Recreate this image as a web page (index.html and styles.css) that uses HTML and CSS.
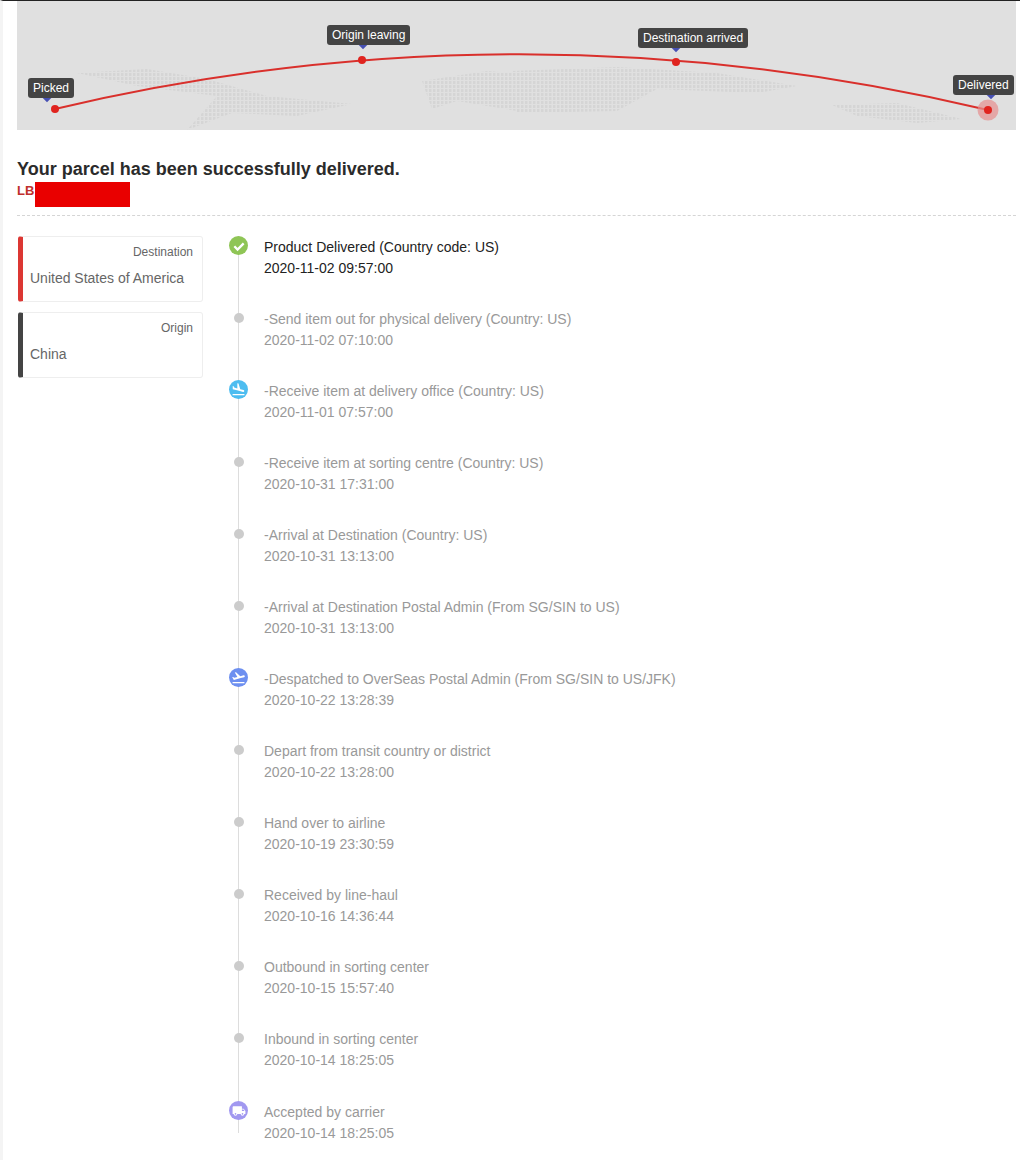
FILE: index.html
```html
<!DOCTYPE html>
<html lang="en">
<head>
    <meta charset="UTF-8">
    <title>Parcel tracking</title>
    <link rel="stylesheet" href="styles.css">
</head>
<body>
    <div class="container">
        <div class="route-map">
            <svg class="route-svg" viewBox="0 0 999 129" width="999" height="129">
                <defs>
                    <pattern id="dots" width="4" height="4" patternUnits="userSpaceOnUse">
                        <rect width="2.5" height="3" fill="#d5d5d5"/>
                    </pattern>
                </defs>
                <g fill="url(#dots)">
                    <polygon points="60,72 130,68 190,78 250,95 335,103 280,115 215,112 170,129 200,95 120,85"/>
                    <polygon points="405,80 470,70 495,72 500,110 440,100 415,108"/>
                    <polygon points="495,70 600,66 700,72 780,85 740,92 640,88 600,110 500,112"/>
                    <polygon points="815,104 880,102 945,118 900,122 840,115"/>
                </g>
                <path class="route-line" d="M38 108 Q 504 -2 971 109"/>
                <circle class="route-halo" cx="971" cy="109" r="10.5"/>
                <circle class="route-dot" cx="38" cy="108" r="4"/>
                <circle class="route-dot" cx="345" cy="59" r="4"/>
                <circle class="route-dot" cx="659" cy="61" r="4"/>
                <circle class="route-dot" cx="971" cy="109" r="4"/>
            </svg>
            <span class="pin pin-picked">Picked</span>
            <span class="pin pin-origin">Origin leaving</span>
            <span class="pin pin-arrived">Destination arrived</span>
            <span class="pin pin-delivered">Delivered</span>
        </div>

        <div class="summary">
            <h1>Your parcel has been successfully delivered.</h1>
            <p class="tracking-no">LB</p>
            <div class="redaction"></div>
        </div>

        <div class="details">
            <div class="places">
                <div class="place-card place-dest">
                    <div class="place-label">Destination</div>
                    <div class="place-name">United States of America</div>
                </div>
                <div class="place-card place-origin">
                    <div class="place-label">Origin</div>
                    <div class="place-name">China</div>
                </div>
            </div>

            <ul class="timeline">
                <li class="event current">
                    <span class="badge badge-green">
                        <svg viewBox="0 0 24 24" width="14" height="14"><path d="M4 12.5l5.5 5.5L20 7.5" fill="none" stroke="#fff" stroke-width="4"/></svg>
                    </span>
                    <div class="event-text">
                        <p>Product Delivered (Country code: US)</p>
                        <p>2020-11-02 09:57:00</p>
                    </div>
                </li>
                <li class="event">
                    <span class="dot"></span>
                    <div class="event-text">
                        <p>-Send item out for physical delivery (Country: US)</p>
                        <p>2020-11-02 07:10:00</p>
                    </div>
                </li>
                <li class="event">
                    <span class="badge badge-blue">
                        <svg viewBox="0 0 24 24" width="15" height="15"><path fill="#fff" d="M2.5 19h19v2h-19zm7.18-5.73l4.35 1.16 5.31 1.42c.8.21 1.62-.26 1.84-1.06.21-.8-.26-1.62-1.06-1.84l-5.31-1.42-2.76-9.02L10.12 2v8.28L5.15 8.95l-.93-2.32-1.45-.39v5.17l1.6.43 5.31 1.43z"/></svg>
                    </span>
                    <div class="event-text">
                        <p>-Receive item at delivery office (Country: US)</p>
                        <p>2020-11-01 07:57:00</p>
                    </div>
                </li>
                <li class="event">
                    <span class="dot"></span>
                    <div class="event-text">
                        <p>-Receive item at sorting centre (Country: US)</p>
                        <p>2020-10-31 17:31:00</p>
                    </div>
                </li>
                <li class="event">
                    <span class="dot"></span>
                    <div class="event-text">
                        <p>-Arrival at Destination (Country: US)</p>
                        <p>2020-10-31 13:13:00</p>
                    </div>
                </li>
                <li class="event">
                    <span class="dot"></span>
                    <div class="event-text">
                        <p>-Arrival at Destination Postal Admin (From SG/SIN to US)</p>
                        <p>2020-10-31 13:13:00</p>
                    </div>
                </li>
                <li class="event">
                    <span class="badge badge-indigo">
                        <svg viewBox="0 0 24 24" width="15" height="15"><path fill="#fff" d="M2.5 19h19v2h-19zm19.57-9.36c-.21-.8-1.04-1.28-1.84-1.06L14.92 10l-6.9-6.43-1.93.51 4.14 7.17-4.97 1.33-1.97-1.54-1.45.39 1.82 3.16.77 1.33 1.6-.43 5.31-1.42 4.35-1.16L21 11.49c.81-.23 1.28-1.05 1.07-1.85z"/></svg>
                    </span>
                    <div class="event-text">
                        <p>-Despatched to OverSeas Postal Admin (From SG/SIN to US/JFK)</p>
                        <p>2020-10-22 13:28:39</p>
                    </div>
                </li>
                <li class="event">
                    <span class="dot"></span>
                    <div class="event-text">
                        <p>Depart from transit country or district</p>
                        <p>2020-10-22 13:28:00</p>
                    </div>
                </li>
                <li class="event">
                    <span class="dot"></span>
                    <div class="event-text">
                        <p>Hand over to airline</p>
                        <p>2020-10-19 23:30:59</p>
                    </div>
                </li>
                <li class="event">
                    <span class="dot"></span>
                    <div class="event-text">
                        <p>Received by line-haul</p>
                        <p>2020-10-16 14:36:44</p>
                    </div>
                </li>
                <li class="event">
                    <span class="dot"></span>
                    <div class="event-text">
                        <p>Outbound in sorting center</p>
                        <p>2020-10-15 15:57:40</p>
                    </div>
                </li>
                <li class="event">
                    <span class="dot"></span>
                    <div class="event-text">
                        <p>Inbound in sorting center</p>
                        <p>2020-10-14 18:25:05</p>
                    </div>
                </li>
                <li class="event last">
                    <span class="badge badge-purple">
                        <svg viewBox="0 0 24 24" width="14" height="14"><path fill="#fff" d="M20 8h-3V4H3c-1.1 0-2 .9-2 2v11h2c0 1.66 1.34 3 3 3s3-1.34 3-3h6c0 1.66 1.34 3 3 3s3-1.34 3-3h2v-5l-3-4zM6 18.5c-.83 0-1.5-.67-1.5-1.5s.67-1.5 1.5-1.5 1.5.67 1.5 1.5-.67 1.5-1.5 1.5zm13.5-9l1.96 2.5H17V9.5h2.5zm-1.5 9c-.83 0-1.5-.67-1.5-1.5s.67-1.5 1.5-1.5 1.5.67 1.5 1.5-.67 1.5-1.5 1.5z"/></svg>
                    </span>
                    <div class="event-text">
                        <p>Accepted by carrier</p>
                        <p>2020-10-14 18:25:05</p>
                    </div>
                </li>
            </ul>
        </div>
    </div>
</body>
</html>
```

FILE: styles.css
```css
* {
    margin: 0;
    padding: 0;
    box-sizing: border-box;
}

body {
    font-family: "Liberation Sans", Arial, sans-serif;
    background: #fff;
    color: #999;
    border-top: 1px solid #222;
    border-left: 3px solid #f4f4f4;
    overflow: hidden;
}

.container {
    padding: 0 4px 0 14px;
}

/* route map */
.route-map {
    position: relative;
    height: 129px;
    background: #e0e0e0;
}

.route-svg {
    display: block;
}

.route-line {
    fill: none;
    stroke: #d9302c;
    stroke-width: 2;
}

.route-dot {
    fill: #e0241f;
}

.route-halo {
    fill: #e58e8e;
    opacity: 0.7;
}

.pin {
    position: absolute;
    height: 20px;
    padding: 0 5px;
    background: #444;
    border-radius: 3px;
    color: #fff;
    font-size: 12px;
    line-height: 20px;
    white-space: nowrap;
}

.pin::after {
    content: "";
    position: absolute;
    top: 17px;
    width: 6px;
    height: 6px;
    background: #4650b4;
    transform: rotate(45deg);
    z-index: -1;
}

.route-map {
    z-index: 0;
}

.pin-picked { left: 11px; top: 77px; }
.pin-picked::after { left: 16px; }
.pin-origin { left: 310px; top: 24px; }
.pin-origin::after { left: 33px; }
.pin-arrived { left: 621px; top: 27px; }
.pin-arrived::after { left: 35px; }
.pin-delivered { left: 936px; top: 74px; }
.pin-delivered::after { left: 35px; }

/* heading */
.summary {
    position: relative;
    height: 86px;
    border-bottom: 1px dashed #d5d5d5;
    padding-top: 29px;
}

.summary h1 {
    color: #2b2b2b;
    font-size: 18px;
    line-height: 20px;
    font-weight: bold;
}

.tracking-no {
    color: #c0302c;
    font-size: 13px;
    font-weight: bold;
    line-height: 26px;
    margin-top: -1px;
}

.redaction {
    position: absolute;
    left: 18px;
    top: 52px;
    width: 95px;
    height: 25px;
    background: #e90000;
}

/* layout below the heading */
.details {
    display: flex;
    padding-top: 20px;
}

.places {
    width: 185px;
    margin-left: 1px;
    display: flex;
    flex-direction: column;
    gap: 10px;
}

.place-card {
    height: 66px;
    border: 1px solid #eee;
    border-left: 5px solid #444;
    border-radius: 3px;
    padding: 8px 9px 0 7px;
}

.place-dest {
    border-left-color: #dc3733;
}

.place-origin {
    border-left-color: #444;
}

.place-label {
    text-align: right;
    font-size: 12px;
    line-height: 15px;
    color: #666;
}

.place-name {
    margin-top: 8px;
    font-size: 14px;
    line-height: 20px;
    color: #666;
}

/* timeline */
.timeline {
    position: relative;
    list-style: none;
    margin-left: 26px;
    flex: 1;
}

.timeline::before {
    content: "";
    position: absolute;
    left: 9px;
    top: 10px;
    bottom: 40px;
    width: 1px;
    background: #ddd;
}

.event {
    position: relative;
    display: flex;
    gap: 16px;
    height: 72px;
}

.event.last {
    margin-top: 1px;
}

.event-text {
    font-size: 14px;
    line-height: 21px;
    padding-top: 1px;
}

.current .event-text {
    color: #222;
}

.badge,
.dot {
    flex: none;
    position: relative;
    border-radius: 50%;
}

.badge {
    width: 19px;
    height: 19px;
    display: flex;
    align-items: center;
    justify-content: center;
}

.dot {
    width: 10px;
    height: 10px;
    margin: 5px 4.5px;
    background: #ccc;
}

.badge-green { background: #8fc556; }
.badge-blue { background: #4dbdf0; }
.badge-indigo { background: #6d8ff0; }
.badge-purple { background: #a198f0; }
```
